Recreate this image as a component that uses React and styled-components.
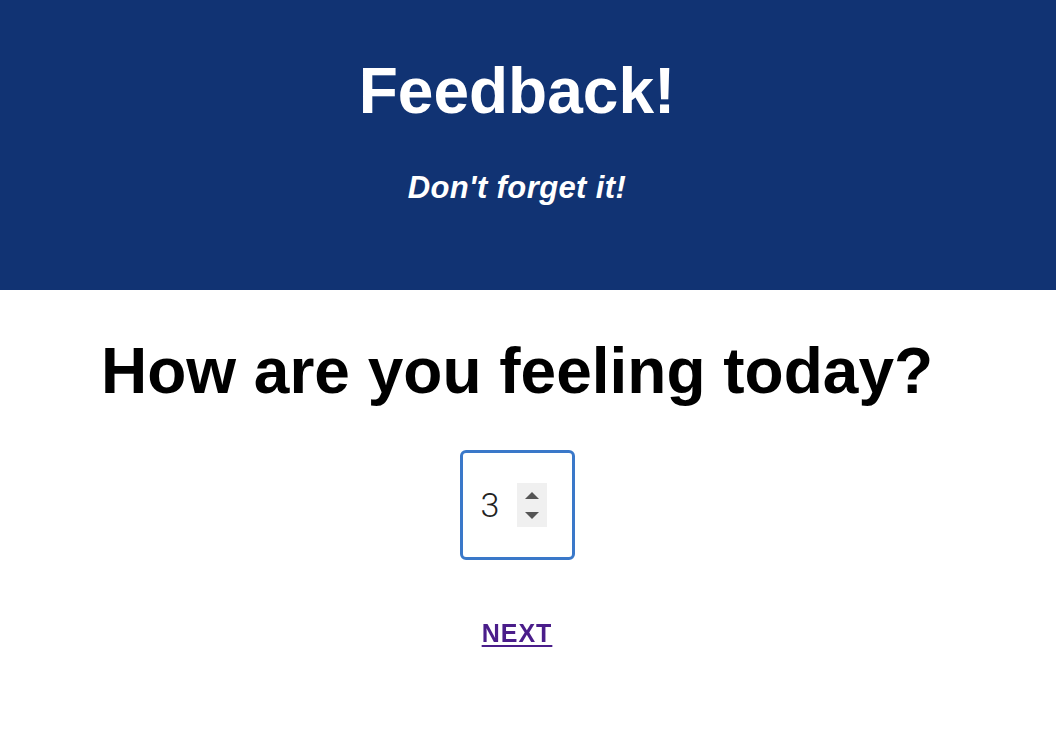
import React, { useState } from "react";
import styled, { createGlobalStyle } from "styled-components";

const GlobalStyle = createGlobalStyle`
  body {
    margin: 0;
    background: #ffffff;
    font-family: "Liberation Sans", Arial, sans-serif;
  }
`;

const Header = styled.header`
  background: #113373;
  height: 290px;
  display: flex;
  flex-direction: column;
  align-items: center;
  padding-right: 22px;
  color: #ffffff;
`;

const Title = styled.h1`
  font-size: 64px;
  font-weight: 700;
  margin: 54px 0 0;
  line-height: 74px;
`;

const Subtitle = styled.h3`
  font-size: 31px;
  font-weight: 700;
  font-style: italic;
  letter-spacing: 0.4px;
  margin: 43px 0 0;
  line-height: 34px;
`;

const Main = styled.main`
  display: flex;
  flex-direction: column;
  align-items: center;
  padding-right: 22px;
`;

const Question = styled.h2`
  font-size: 64px;
  font-weight: 700;
  margin: 44px 0 0;
  line-height: 74px;
  color: #000000;
`;

const Field = styled.div`
  box-sizing: border-box;
  width: 115px;
  height: 110px;
  margin-top: 42px;
  border: 3px solid #3a78c9;
  border-radius: 6px;
  display: flex;
  align-items: center;
  padding-left: 18px;
  background: #ffffff;
`;

const NumberInput = styled.input`
  width: 29px;
  padding: 0;
  border: none;
  outline: none;
  background: transparent;
  font-family: Roboto, sans-serif;
  font-size: 34px;
  font-weight: 300;
  color: #222222;
  caret-color: #000000;
  -moz-appearance: textfield;

  &::-webkit-inner-spin-button,
  &::-webkit-outer-spin-button {
    -webkit-appearance: none;
    margin: 0;
  }
`;

const Stepper = styled.div`
  width: 30px;
  height: 44px;
  margin-left: 7px;
  background: #f0f0f0;
  display: flex;
  flex-direction: column;
`;

const StepButton = styled.button`
  flex: 1;
  border: none;
  padding: 0;
  background: transparent;
  display: flex;
  align-items: center;
  justify-content: center;
  cursor: pointer;
`;

const Arrow = styled.span`
  width: 0;
  height: 0;
  border-left: 7.5px solid transparent;
  border-right: 7.5px solid transparent;
  border-${(props) => (props.up ? "bottom" : "top")}: 7px solid #555555;
  margin-${(props) => (props.up ? "top" : "bottom")}: 2px;
`;

const NextLink = styled.a`
  margin-top: 59px;
  font-size: 25px;
  line-height: 29px;
  font-weight: 700;
  letter-spacing: 1px;
  color: #4a1d8a;
  text-decoration: underline;
  text-underline-offset: 3px;
  text-decoration-thickness: 2px;
  cursor: pointer;
`;

const App = () => {
  const [score, setScore] = useState(3);

  const step = (amount) => {
    setScore((value) => Math.min(5, Math.max(1, Number(value) + amount)));
  };

  return (
    <>
      <GlobalStyle />
      <Header>
        <Title>Feedback!</Title>
        <Subtitle>Don't forget it!</Subtitle>
      </Header>
      <Main>
        <Question>How are you feeling today?</Question>
        <Field>
          <NumberInput
            type="number"
            min="1"
            max="5"
            value={score}
            autoFocus
            onChange={(event) => setScore(event.target.value)}
          />
          <Stepper>
            <StepButton type="button" onClick={() => step(1)}>
              <Arrow up />
            </StepButton>
            <StepButton type="button" onClick={() => step(-1)}>
              <Arrow />
            </StepButton>
          </Stepper>
        </Field>
        <NextLink href="#">NEXT</NextLink>
      </Main>
    </>
  );
};

export default App;
